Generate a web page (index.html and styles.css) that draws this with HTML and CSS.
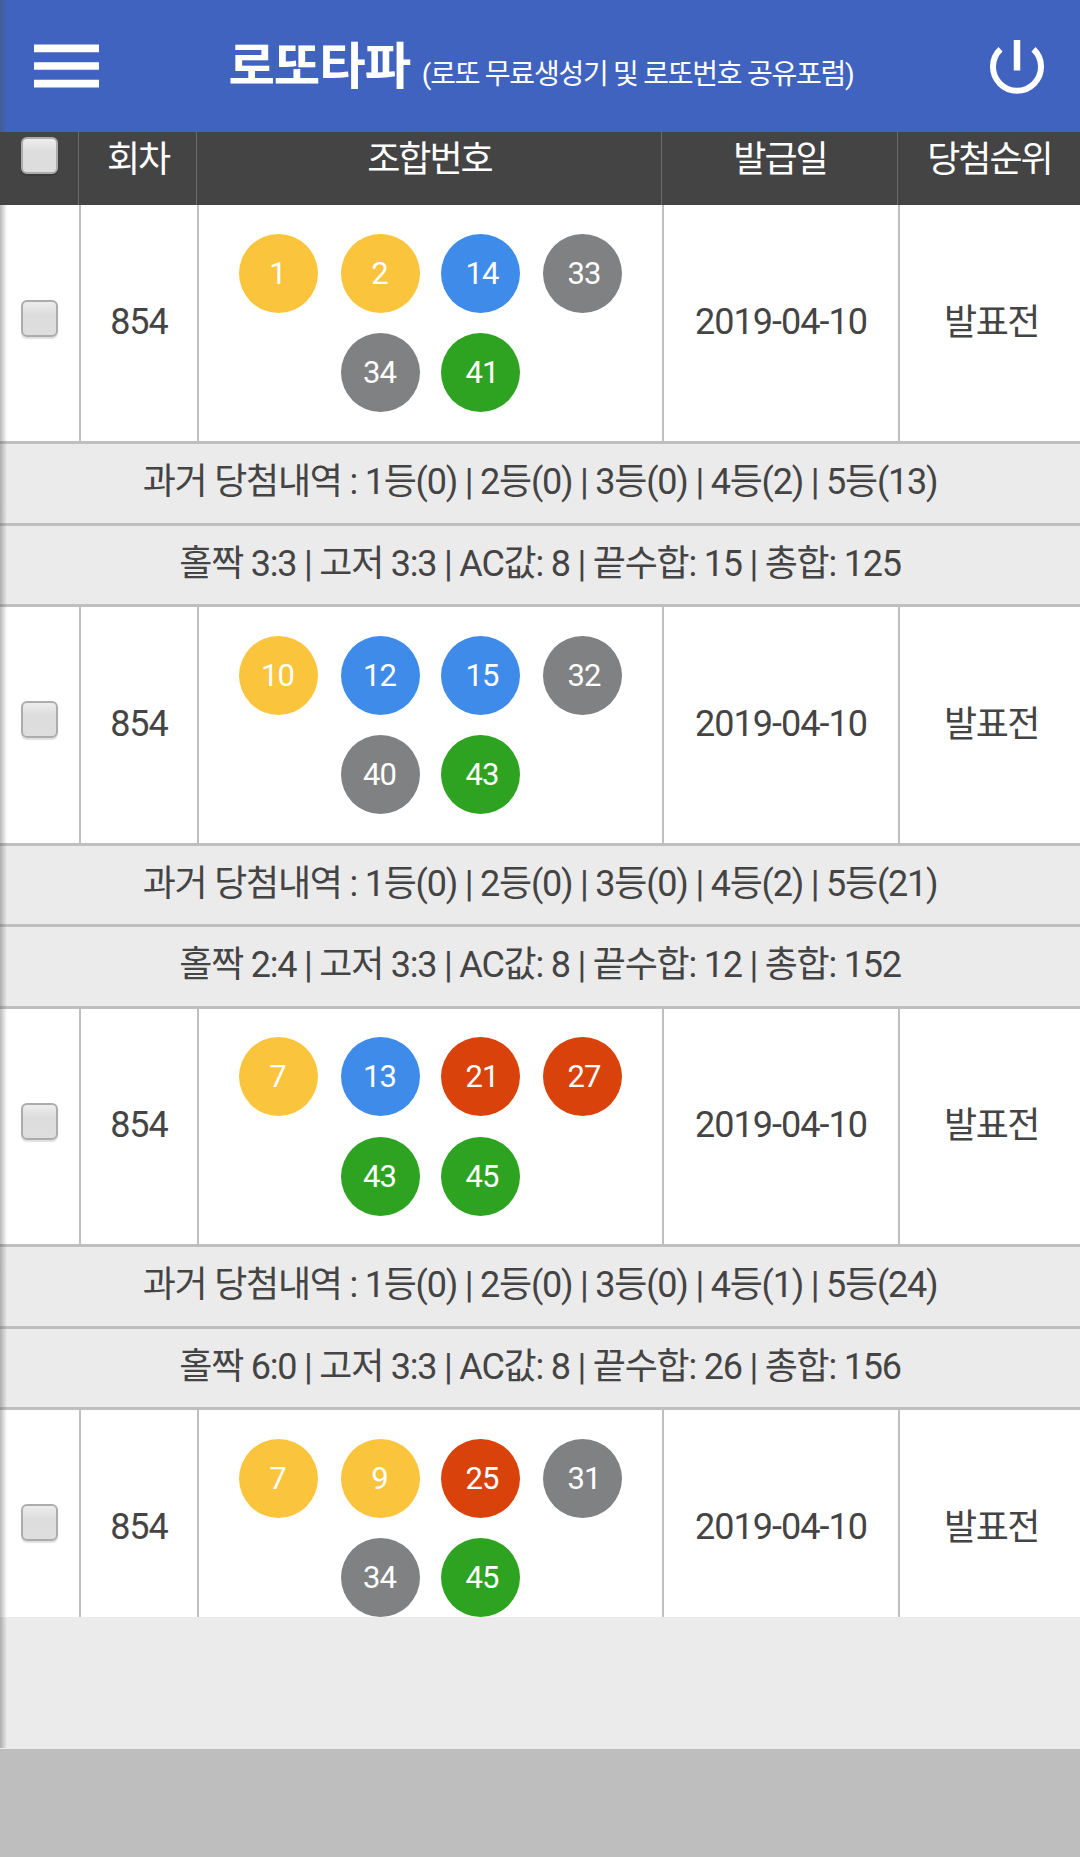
FILE: index.html
```html
<!doctype html>
<html lang="ko">
  <head>
    <meta charset="UTF-8">
    <meta name="viewport" content="width=device-width, initial-scale=1.0">
    <title>로또타파</title>
    <link rel="stylesheet" href="styles.css">
  </head>
  <body>
    <div class="page">
      <!-- Top bar -->
      <header class="topbar">
        <button class="menu-btn" type="button">
          <svg width="65" height="44" viewBox="0 0 65 44"><path d="M0 4.4h65M0 22h65M0 39.6h65" stroke="#fff" stroke-width="7.6"/></svg>
        </button>
        <h1 class="title">로또타파 <small>(로또 무료생성기 및 로또번호 공유포럼)</small></h1>
        <button class="power-btn" type="button">
          <svg width="56" height="58" viewBox="0 0 56 58" fill="none" stroke="#fff"><path d="M28 2v30.5" stroke-width="6.5"/><path d="M11.5 11.3a24 24 0 1 0 33 0" stroke-width="6"/></svg>
        </button>
      </header>

      <!-- Column names -->
      <div class="head">
        <div><input type="checkbox" class="check"></div>
        <div>회차</div>
        <div>조합번호</div>
        <div>발급일</div>
        <div>당첨순위</div>
      </div>

      <!-- Issued numbers -->
      <div class="list" id="list"></div>
    </div>

    <script>
      const games = [
        { numbers: [1, 2, 14, 33, 34, 41], wins: [0, 0, 0, 2, 13], odd: '3:3', high: '3:3', ac: 8, end: 15, sum: 125 },
        { numbers: [10, 12, 15, 32, 40, 43], wins: [0, 0, 0, 2, 21], odd: '2:4', high: '3:3', ac: 8, end: 12, sum: 152 },
        { numbers: [7, 13, 21, 27, 43, 45], wins: [0, 0, 0, 1, 24], odd: '6:0', high: '3:3', ac: 8, end: 26, sum: 156 },
        { numbers: [7, 9, 25, 31, 34, 45] }
      ];

      // Ball colour goes by tens
      function ballColor(n) {
        if (n <= 10) return 'yellow';
        if (n <= 20) return 'blue';
        if (n <= 30) return 'red';
        if (n <= 40) return 'gray';
        return 'green';
      }

      let html = '';
      games.forEach(game => {
        const balls = game.numbers.map(n => `<span class="ball ${ballColor(n)}">${n}</span>`);
        html += `<div class="row">
          <div class="pick"><input type="checkbox" class="check"></div>
          <div>854</div>
          <div class="balls">
            <div class="line">${balls.slice(0, 4).join('')}</div>
            <div class="line second">${balls.slice(4).join('')}</div>
          </div>
          <div>2019-04-10</div>
          <div class="rank">발표전</div>
        </div>`;
        if (game.wins) {
          const wins = game.wins.map((w, i) => `${i + 1}등(${w})`).join(' | ');
          html += `<div class="info">과거 당첨내역 : ${wins}</div>`;
          html += `<div class="info">홀짝 ${game.odd} | 고저 ${game.high} | AC값: ${game.ac} | 끝수합: ${game.end} | 총합: ${game.sum}</div>`;
        }
      });
      document.getElementById('list').innerHTML = html;
    </script>
  </body>
</html>
```
FILE: styles.css
```css
* {
  box-sizing: border-box;
}
body {
  margin: 0;
  background: #bebebe;
  color: #444;
  font-family: Roboto, "Noto Sans CJK KR", sans-serif;
  font-size: 36px;
  letter-spacing: -1px;
}
.page {
  position: relative;
  height: 1749px;
  background: #ebebeb;
}
/* shadow of the closed side menu */
.page::before {
  content: "";
  position: absolute;
  z-index: 1;
  left: 0;
  top: 0;
  width: 7px;
  height: 1748px;
  background: linear-gradient(to right, rgba(80, 80, 80, 0.4), rgba(80, 80, 80, 0));
}
.topbar {
  display: flex;
  align-items: center;
  justify-content: space-between;
  height: 132px;
  padding: 0 35px 0 34px;
  background: #4063bf;
  color: #fff;
}
.topbar button {
  padding: 0;
  border: none;
  background: none;
}
.topbar svg {
  display: block;
}
.power-btn {
  margin-top: 1px;
}
.title {
  margin: 0 6px 0 0;
  padding-bottom: 8px;
  font-size: 50.5px;
  font-weight: 700;
  white-space: nowrap;
}
.title small {
  font-size: 28px;
  font-weight: 400;
  letter-spacing: -1.25px;
}
.head, .row {
  display: grid;
  text-align: center;
}
.head {
  position: relative;
  z-index: 2;
  grid-template-columns: 79px 118px 465px 236px 182px;
  height: 73px;
  line-height: 56px;
  letter-spacing: -2px;
  background: #444;
  color: #fff;
}
.head div {
  padding-left: 1px;
  border-right: 1px solid #6c6c6c;
}
.head div:last-child, .row > div:last-child {
  border-right: none;
}
.list {
  height: 1412px;
  overflow: hidden;
}
.row {
  grid-template-columns: 81px 118px 465px 236px 180px;
  height: 238.6px;
  border-top: 3px solid #bfbfbf;
  background: #fff;
}
.row:first-child {
  height: 236px;
  border-top: none;
}
.row > div {
  display: flex;
  align-items: center;
  justify-content: center;
  padding-bottom: 2px;
  border-right: 2px solid #bfbfbf;
}
.row .pick {
  padding-bottom: 10px;
}
.row .rank {
  padding: 0 0 8px 3px;
  letter-spacing: -1.5px;
}
.check {
  appearance: none;
  width: 37px;
  height: 37px;
  margin: 0;
  border: 2px solid #acacac;
  border-radius: 6px;
  background: linear-gradient(#ededed, #dcdcdc 40%, #dedede);
  box-shadow: 0 2px 1px rgba(0, 0, 0, 0.12);
}
.head .check {
  display: block;
  margin: 5px 0 0 20px;
}
.row .balls {
  flex-direction: column;
  gap: 20.5px;
  padding-bottom: 0;
}
.line {
  display: flex;
  gap: 23px;
}
.ball {
  width: 79px;
  height: 79px;
  border-radius: 50%;
  color: #fff;
  font-size: 31px;
  line-height: 79px;
  text-align: center;
  text-indent: -2px;
}
.ball:nth-child(3), .second .ball:nth-child(2) {
  margin-left: -2px;
  text-indent: 3px;
}
.ball:nth-child(4) {
  text-indent: 3px;
}
.yellow {
  background: #fbc43d;
}
.blue {
  background: #3f8bea;
}
.red {
  background: #d9420b;
}
.gray {
  background: #808182;
}
.green {
  background: #2ea321;
}
.info {
  height: 81.5px;
  border-top: 3px solid #bfbfbf;
  line-height: 77px;
  letter-spacing: -1.22px;
  text-align: center;
}
```
